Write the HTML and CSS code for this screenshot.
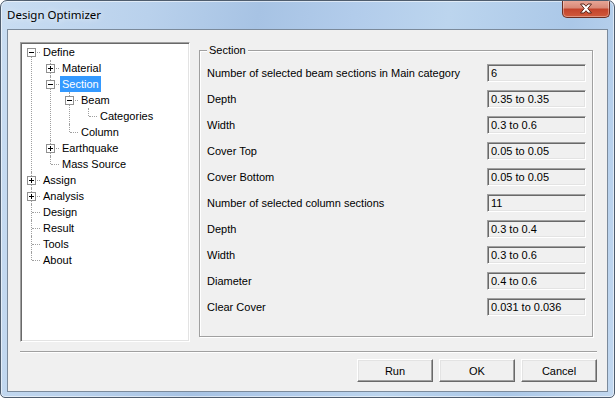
FILE: index.html
```html
<!DOCTYPE html>
<html lang="en">
<head>
    <meta charset="UTF-8">
    <meta name="viewport" content="width=device-width, initial-scale=1.0">
    <title>Design Optimizer</title>
    <link rel="stylesheet" href="styles.css">
</head>
<body>
    <div class="window">
        <div class="titlebar">
            <span class="title">Design Optimizer</span>
            <button class="close" aria-label="Close">
                <svg width="14" height="11" viewBox="0 0 14 11">
                    <path d="M1.5 1 H5 L7 3.3 L9 1 H12.5 L8.8 5.5 L12.5 10 H9 L7 7.7 L5 10 H1.5 L5.2 5.5 Z" fill="#fff" stroke="#5a2418" stroke-width="1" stroke-linejoin="round"/>
                </svg>
            </button>
        </div>

        <div class="client">
            <div class="top">
                <div class="tree">
                    <ul>
                        <li class="open">
                            <div class="row"><span class="exp minus"></span><span class="label">Define</span></div>
                            <ul>
                                <li>
                                    <div class="row"><span class="exp plus"></span><span class="label">Material</span></div>
                                </li>
                                <li class="open">
                                    <div class="row"><span class="exp minus"></span><span class="label selected">Section</span></div>
                                    <ul>
                                        <li class="open">
                                            <div class="row"><span class="exp minus"></span><span class="label">Beam</span></div>
                                            <ul>
                                                <li><div class="row"><span class="label">Categories</span></div></li>
                                            </ul>
                                        </li>
                                        <li><div class="row"><span class="label">Column</span></div></li>
                                    </ul>
                                </li>
                                <li>
                                    <div class="row"><span class="exp plus"></span><span class="label">Earthquake</span></div>
                                </li>
                                <li><div class="row"><span class="label">Mass Source</span></div></li>
                            </ul>
                        </li>
                        <li><div class="row"><span class="exp plus"></span><span class="label">Assign</span></div></li>
                        <li><div class="row"><span class="exp plus"></span><span class="label">Analysis</span></div></li>
                        <li><div class="row"><span class="label">Design</span></div></li>
                        <li><div class="row"><span class="label">Result</span></div></li>
                        <li><div class="row"><span class="label">Tools</span></div></li>
                        <li><div class="row"><span class="label">About</span></div></li>
                    </ul>
                </div>

                <fieldset class="group">
                    <legend>Section</legend>
                    <div class="fields">
                        <label>Number of selected beam sections in Main category</label>
                        <div class="box">6</div>
                        <label>Depth</label>
                        <div class="box">0.35 to 0.35</div>
                        <label>Width</label>
                        <div class="box">0.3 to 0.6</div>
                        <label>Cover Top</label>
                        <div class="box">0.05 to 0.05</div>
                        <label>Cover Bottom</label>
                        <div class="box">0.05 to 0.05</div>
                        <label>Number of selected column sections</label>
                        <div class="box">11</div>
                        <label>Depth</label>
                        <div class="box">0.3 to 0.4</div>
                        <label>Width</label>
                        <div class="box">0.3 to 0.6</div>
                        <label>Diameter</label>
                        <div class="box">0.4 to 0.6</div>
                        <label>Clear Cover</label>
                        <div class="box">0.031 to 0.036</div>
                    </div>
                </fieldset>
            </div>

            <div class="separator"></div>

            <div class="buttons">
                <button class="btn">Run</button>
                <button class="btn">OK</button>
                <button class="btn">Cancel</button>
            </div>
        </div>
    </div>
</body>
</html>
```

FILE: styles.css
```css
* {
    box-sizing: border-box;
}
body {
    margin: 0;
    font-family: "Liberation Sans", Arial, sans-serif;
    font-size: 11px;
    color: #000;
    background: #fff;
}
.window {
    width: 615px;
    height: 398px;
    display: flex;
    flex-direction: column;
    border: 1px solid #4f5d6e;
    border-radius: 7px 7px 5px 5px;
    background: linear-gradient(100deg, #c9ddf2 0%, #b9d1ec 22%, #a7c3e4 38%, #b2cceb 52%, #bcd5ee 66%, #abc8e8 84%, #c2d8f0 100%);
    box-shadow: inset 0 0 0 1px rgba(255, 255, 255, 0.55);
    overflow: hidden;
}
.titlebar {
    height: 28px;
    display: flex;
    justify-content: space-between;
    align-items: flex-start;
    padding: 0 4px 0 6px;
}
.title {
    font-family: "Noto Sans", "Liberation Sans", sans-serif;
    font-size: 11.5px;
    line-height: 28px;
    color: #000;
    text-shadow: 0 0 6px rgba(255, 255, 255, 0.9);
}
.close {
    width: 48px;
    height: 18px;
    margin-top: -1px;
    padding: 0;
    border: 1px solid #6b2e22;
    border-top: none;
    border-radius: 0 0 5px 5px;
    background: linear-gradient(#e9a99a 0%, #d98a78 45%, #c4442c 55%, #d05a3c 100%);
    box-shadow: inset 0 0 0 1px rgba(255, 255, 255, 0.35);
    display: flex;
    align-items: center;
    justify-content: center;
}
.client {
    flex: 1;
    margin: 0 6px 5px 6px;
    border: 1px solid #7b8a9b;
    background: #f0f0f0;
    padding: 12px 10px 8px 12px;
    display: flex;
    flex-direction: column;
}
.top {
    display: flex;
    align-items: flex-start;
    gap: 9px;
}

/* tree view */
.tree {
    width: 170px;
    height: 300px;
    background: #fff;
    border-top: 1px solid #a0a0a0;
    border-left: 1px solid #a0a0a0;
    border-right: 1px solid #fff;
    border-bottom: 1px solid #fff;
    box-shadow: inset 1px 1px #696969, inset -1px -1px #e3e3e3;
    padding: 1px;
}
.tree ul {
    list-style: none;
    margin: 0;
    padding: 0;
}
.tree ul ul {
    padding-left: 19px;
}
.tree li {
    position: relative;
}
.tree li::before {
    content: "";
    position: absolute;
    left: 9px;
    top: 0;
    bottom: 0;
    border-left: 1px dotted #a0a0a0;
}
.tree li:last-child::before {
    bottom: auto;
    height: 8px;
}
.tree > ul > li:first-child::before {
    top: 8px;
}
.tree li::after {
    content: "";
    position: absolute;
    left: 10px;
    top: 8px;
    width: 8px;
    border-top: 1px dotted #a0a0a0;
}
.row {
    position: relative;
    height: 16px;
    padding-left: 19px;
    display: flex;
    align-items: center;
}
.label {
    padding: 0 2px;
    line-height: 16px;
    white-space: nowrap;
}
.label.selected {
    background: #3399ff;
    color: #fff;
}
.exp {
    position: absolute;
    z-index: 1;
    left: 5px;
    top: 4px;
    width: 9px;
    height: 9px;
    border: 1px solid #919191;
    background: #fff;
}
.exp::before {
    content: "";
    position: absolute;
    left: 1px;
    top: 3px;
    width: 5px;
    height: 1px;
    background: #000;
}
.exp.plus::after {
    content: "";
    position: absolute;
    left: 3px;
    top: 1px;
    width: 1px;
    height: 5px;
    background: #000;
}

/* group box */
.group {
    width: 394px;
    margin: 2px 0 0 0;
    padding: 7px 6px 20px 7px;
    border: 1px solid #a0a0a0;
    box-shadow: inset 1px 1px #fff, 1px 1px #fff;
}
.group legend {
    padding: 0 2px;
    line-height: 13px;
    background: #f0f0f0;
}
.fields {
    display: grid;
    grid-template-columns: 1fr 99px;
    grid-auto-rows: 18px;
    row-gap: 8px;
    align-items: center;
}
.fields label {
    white-space: nowrap;
}
.box {
    height: 18px;
    padding: 0 3px;
    line-height: 16px;
    background: #f0f0f0;
    border-top: 1px solid #a0a0a0;
    border-left: 1px solid #a0a0a0;
    border-right: 1px solid #fff;
    border-bottom: 1px solid #fff;
    box-shadow: inset 1px 1px #696969, inset -1px -1px #e3e3e3;
}

/* footer */
.separator {
    height: 2px;
    margin-top: 9px;
    border-top: 1px solid #a0a0a0;
    border-bottom: 1px solid #fff;
}
.buttons {
    display: flex;
    justify-content: flex-end;
    gap: 6px;
    margin-top: 6px;
}
.btn {
    width: 76px;
    height: 23px;
    padding: 0;
    font-family: inherit;
    font-size: 11px;
    color: #000;
    background: #f0f0f0;
    border-top: 1px solid #fff;
    border-left: 1px solid #fff;
    border-right: 1px solid #696969;
    border-bottom: 1px solid #696969;
    box-shadow: inset -1px -1px #a0a0a0, inset 1px 1px #e3e3e3;
}
```
